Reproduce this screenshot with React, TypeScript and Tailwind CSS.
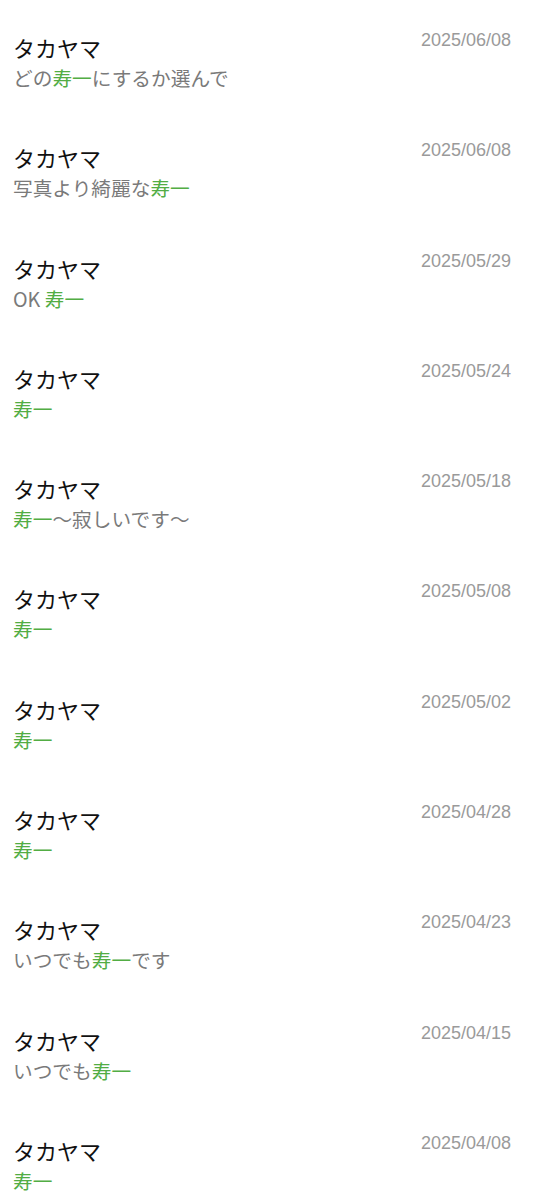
import React from "react";

type Item = { date: string; parts: { text: string; hl?: boolean }[] };

const items: Item[] = [
  { date: "2025/06/08", parts: [{ text: "どの" }, { text: "寿一", hl: true }, { text: "にするか選んで" }] },
  { date: "2025/06/08", parts: [{ text: "写真より綺麗な" }, { text: "寿一", hl: true }] },
  { date: "2025/05/29", parts: [{ text: "OK " }, { text: "寿一", hl: true }] },
  { date: "2025/05/24", parts: [{ text: "寿一", hl: true }] },
  { date: "2025/05/18", parts: [{ text: "寿一", hl: true }, { text: "〜寂しいです〜" }] },
  { date: "2025/05/08", parts: [{ text: "寿一", hl: true }] },
  { date: "2025/05/02", parts: [{ text: "寿一", hl: true }] },
  { date: "2025/04/28", parts: [{ text: "寿一", hl: true }] },
  { date: "2025/04/23", parts: [{ text: "いつでも" }, { text: "寿一", hl: true }, { text: "です" }] },
  { date: "2025/04/15", parts: [{ text: "いつでも" }, { text: "寿一", hl: true }] },
  { date: "2025/04/08", parts: [{ text: "寿一", hl: true }] },
];

export default function App() {
  return (
    <div
      className="min-h-[1200px] w-full bg-white overflow-hidden"
      style={{ fontFamily: '"Noto Sans CJK JP", "Noto Sans", sans-serif' }}
    >
      {items.map((item, i) => (
        <div key={i} className="flex h-[110.3px] items-start justify-between pl-[13px] pr-[27px] pt-[32px]">
          <div className="flex flex-col">
            <div className="text-[22px] leading-[30px] text-[#111111]">タカヤマ</div>
            <div className="text-[19.7px] leading-[31px] text-[#7a7a7a]">
              {item.parts.map((p, j) => (
                <span key={j} className={p.hl ? "text-[#52ad44]" : ""}>
                  {p.text}
                </span>
              ))}
            </div>
          </div>
          <div className="-mt-[2px] font-['Liberation_Sans',sans-serif] text-[18px] leading-[20px] text-[#9a9a9a]">
            {item.date}
          </div>
        </div>
      ))}
    </div>
  );
}
